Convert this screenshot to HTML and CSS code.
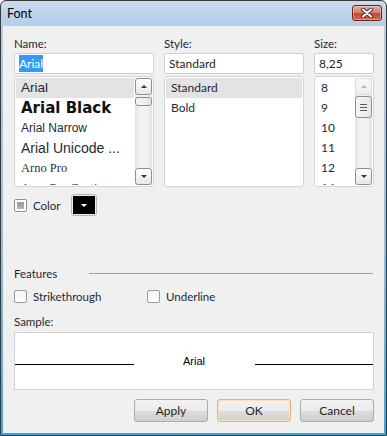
FILE: index.html
```html
<!DOCTYPE html>
<html lang="en">

<head>
    <meta charset="UTF-8">
    <title>Font</title>
    <link rel="stylesheet" href="styles.css">
</head>

<body>
    <div class="window">
        <div class="titlebar">
            <span class="title">Font</span>
            <div class="close-btn">
                <svg width="14" height="10" viewBox="0 0 14 10">
                    <path d="M3 1.5 L11 8.5 M11 1.5 L3 8.5" stroke="#4a3632" stroke-width="4" stroke-linecap="round" fill="none"/>
                    <path d="M3 1.5 L11 8.5 M11 1.5 L3 8.5" stroke="#ffffff" stroke-width="2" stroke-linecap="round" fill="none"/>
                </svg>
            </div>
        </div>

        <div class="client">
            <div class="fields">
                <div class="field">
                    <div class="lbl">Name:</div>
                    <div class="textbox"><span class="selected-text">Arial</span></div>
                    <div class="listbox">
                        <ul class="items">
                            <li class="current f-arial">Arial</li>
                            <li class="f-black">Arial Black</li>
                            <li class="f-narrow">Arial Narrow</li>
                            <li class="f-unicode">Arial Unicode ...</li>
                            <li class="f-arno">Arno Pro</li>
                            <li class="f-arno-caption">Arno Pro Caption</li>
                        </ul>
                        <div class="scrollbar">
                            <div class="sb-btn"><span class="arrow-up"></span></div>
                            <div class="sb-track"><div class="sb-thumb small"></div></div>
                            <div class="sb-btn"><span class="arrow-down"></span></div>
                        </div>
                    </div>
                </div>

                <div class="field">
                    <div class="lbl">Style:</div>
                    <div class="textbox">Standard</div>
                    <div class="listbox">
                        <ul class="items">
                            <li class="current">Standard</li>
                            <li>Bold</li>
                        </ul>
                    </div>
                </div>

                <div class="field">
                    <div class="lbl">Size:</div>
                    <div class="textbox">8,25</div>
                    <div class="listbox">
                        <ul class="items">
                            <li>8</li>
                            <li>9</li>
                            <li>10</li>
                            <li>11</li>
                            <li>12</li>
                            <li>14</li>
                        </ul>
                        <div class="scrollbar">
                            <div class="sb-btn disabled"><span class="arrow-up"></span></div>
                            <div class="sb-track">
                                <div class="sb-thumb grip">
                                    <svg width="7" height="7" viewBox="0 0 7 7">
                                        <path d="M0 0.5 H7 M0 3.5 H7 M0 6.5 H7" stroke="#5a5a5a" stroke-width="1"/>
                                    </svg>
                                </div>
                            </div>
                            <div class="sb-btn"><span class="arrow-down"></span></div>
                        </div>
                    </div>
                </div>
            </div>

            <div class="color-row">
                <span class="checkbox mixed"></span>
                <span class="check-label">Color</span>
                <div class="color-btn"><span class="swatch"><span class="arrow-white"></span></span></div>
            </div>

            <div class="group-head">
                <span class="group-title">Features</span>
                <span class="rule"></span>
            </div>

            <div class="options">
                <div class="option"><span class="checkbox"></span><span class="check-label">Strikethrough</span></div>
                <div class="option"><span class="checkbox"></span><span class="check-label">Underline</span></div>
            </div>

            <div class="lbl sample-lbl">Sample:</div>
            <div class="sample">
                <span class="sample-line"></span>
                <span class="sample-text">Arial</span>
                <span class="sample-line"></span>
            </div>

            <div class="buttons">
                <div class="btn">Apply</div>
                <div class="btn default">OK</div>
                <div class="btn">Cancel</div>
            </div>
        </div>
    </div>
</body>

</html>
```

FILE: styles.css
```css
body {
    margin: 0;
    background: #ffffff;
    font-family: "Lato", "Noto Sans", sans-serif;
    font-size: 11.5px;
    color: #1f2838;
}

.window {
    box-sizing: border-box;
    width: 387px;
    height: 436px;
    border: 1px solid #3a3a3a;
    border-radius: 6px 6px 0 0;
    background: linear-gradient(#c9dcf0 0, #b3cde8 25px, #93bfe4 55%, #3aa6dc 100%);
    display: flex;
    flex-direction: column;
}

.titlebar {
    height: 25px;
    display: flex;
    justify-content: space-between;
    align-items: flex-start;
    padding: 0 4px 0 6px;
}

.title {
    font-size: 12.5px;
    line-height: 25px;
    color: #000000;
}

.close-btn {
    box-sizing: border-box;
    width: 30px;
    height: 16px;
    margin-top: 4px;
    border: 1px solid #6b2419;
    border-radius: 3px;
    background: linear-gradient(#e9a597 0, #d98372 45%, #c8442d 55%, #cf6a52 100%);
    box-shadow: inset 0 0 0 1px rgba(255, 255, 255, 0.35);
    display: flex;
    align-items: center;
    justify-content: center;
}

.client {
    height: 407px;
    margin: 0 2px;
    background: #f0f0f0;
    box-sizing: border-box;
    padding: 10px 10px 0 11px;
}

/* top three columns */
.fields {
    display: grid;
    grid-template-columns: 140px 140px 60px;
    column-gap: 10px;
}

.lbl {
    line-height: 15px;
    height: 15px;
    margin-bottom: 2px;
}

.textbox {
    box-sizing: border-box;
    height: 21px;
    border: 1px solid #d0d0d0;
    border-radius: 2px;
    background: #ffffff;
    padding-left: 4px;
    line-height: 19px;
    font-size: 12px;
    color: #1f1f1f;
}

.selected-text {
    background: #3399ff;
    color: #ffffff;
    padding: 1px 0;
}

.listbox {
    box-sizing: border-box;
    height: 111px;
    margin-top: 2px;
    border: 1px solid #d5d5d5;
    border-radius: 3px;
    background: #ffffff;
    display: flex;
    overflow: hidden;
}

.items {
    list-style: none;
    margin: 1px;
    padding: 0;
    flex: 1;
    overflow: hidden;
}

.items li {
    height: 20px;
    line-height: 20px;
    padding-left: 5px;
    white-space: nowrap;
    overflow: hidden;
    font-size: 12px;
}

.items li.current {
    background: #e3e3e3;
}

.items li.f-arial {
    font-family: "Liberation Sans", sans-serif;
    font-size: 13.5px;
}

.items li.f-black {
    font-family: "DejaVu Sans", sans-serif;
    font-weight: bold;
    font-size: 15px;
    color: #111111;
}

.items li.f-narrow {
    font-family: "Liberation Sans Narrow", "Liberation Sans", sans-serif;
    font-size: 12px;
}

.items li.f-unicode {
    font-family: "Liberation Sans", sans-serif;
    font-size: 14px;
}

.items li.f-arno,
.items li.f-arno-caption {
    font-family: "Liberation Serif", serif;
    font-size: 12.5px;
    color: #333333;
}

/* scrollbar */
.scrollbar {
    width: 17px;
    margin: 1px 1px 1px 0;
    display: flex;
    flex-direction: column;
    background: #ececec;
}

.sb-btn {
    box-sizing: border-box;
    height: 17px;
    border: 1px solid #8e8f8f;
    border-radius: 3px;
    background: linear-gradient(#fdfdfd, #e8e8e8);
    display: flex;
    align-items: center;
    justify-content: center;
}

.sb-btn.disabled {
    border-color: #dcdcdc;
    background: linear-gradient(#f8f8f8, #eeeeee);
}

.arrow-up {
    width: 0;
    height: 0;
    border-left: 3px solid transparent;
    border-right: 3px solid transparent;
    border-bottom: 3px solid #333333;
}

.sb-btn.disabled .arrow-up {
    border-bottom-color: #b8b8b8;
}

.arrow-down {
    width: 0;
    height: 0;
    border-left: 3px solid transparent;
    border-right: 3px solid transparent;
    border-top: 3px solid #333333;
}

.sb-track {
    flex: 1;
    padding: 0 1px;
    background: linear-gradient(90deg, #e2e2e2, #f2f2f2 30%, #f2f2f2 70%, #e2e2e2);
}

.sb-thumb {
    box-sizing: border-box;
    border: 1px solid #8e8f8f;
    border-radius: 3px;
    background: linear-gradient(90deg, #f6f6f6, #e6e6e6);
}

.sb-thumb.small {
    height: 9px;
    margin: 2px -1px 0;
}

.sb-thumb.grip {
    height: 22px;
    margin: 1px -1px 0;
    display: flex;
    align-items: center;
    justify-content: center;
}

/* color row */
.color-row {
    margin-top: 7px;
    height: 22px;
    display: flex;
    align-items: center;
}

.checkbox {
    box-sizing: border-box;
    width: 13px;
    height: 13px;
    border: 1px solid #9c9c9c;
    border-radius: 2px;
    background: linear-gradient(#f4f4f4, #ffffff);
    flex-shrink: 0;
}

.checkbox.mixed {
    border-color: #8e8f8f;
    background: #ffffff;
    padding: 2px;
}

.checkbox.mixed::before {
    content: "";
    display: block;
    width: 7px;
    height: 7px;
    background: linear-gradient(#989898, #b8b8b8);
}

.check-label {
    margin-left: 6px;
    line-height: 15px;
}

.color-btn {
    box-sizing: border-box;
    width: 26px;
    height: 22px;
    margin-left: 10px;
    border: 1px solid #b5b5b5;
    border-radius: 3px;
    padding: 1px;
    background: #ececec;
}

.swatch {
    display: flex;
    width: 100%;
    height: 100%;
    background: #000000;
    align-items: center;
    justify-content: center;
}

.arrow-white {
    width: 0;
    height: 0;
    border-left: 3px solid transparent;
    border-right: 3px solid transparent;
    border-top: 3px solid #ffffff;
}

/* features */
.group-head {
    margin-top: 50px;
    height: 15px;
    display: flex;
    align-items: center;
}

.group-title {
    width: 75px;
    line-height: 15px;
}

.rule {
    flex: 1;
    height: 1px;
    margin-right: 1px;
    background: #a0a0a0;
}

.options {
    margin-top: 8px;
    height: 15px;
    display: flex;
    align-items: center;
}

.option {
    display: flex;
    align-items: center;
}

.option:first-child {
    width: 133px;
}

.sample-lbl {
    margin-top: 10px;
    margin-bottom: 0;
}

.sample {
    box-sizing: border-box;
    height: 58px;
    margin-top: 3px;
    border: 1px solid #d3d3d3;
    background: #ffffff;
    padding-top: 21px;
    display: flex;
    align-items: baseline;
}

.sample-line {
    flex: 1;
    height: 0;
    border-bottom: 1px solid #000000;
}

.sample-text {
    width: 121px;
    text-align: center;
    font-family: "Liberation Sans", sans-serif;
    font-size: 11px;
    line-height: 15px;
    color: #000000;
}

/* dialog buttons */
.buttons {
    margin-top: 9px;
    display: flex;
    justify-content: flex-end;
    gap: 9px;
}

.btn {
    box-sizing: border-box;
    width: 74px;
    height: 23px;
    border: 1px solid #acacac;
    border-radius: 3px;
    background: linear-gradient(#f2f2f2 0, #ebebeb 50%, #dddddd 51%, #cfcfcf 100%);
    text-align: center;
    line-height: 21px;
    font-size: 12px;
    color: #1f1f1f;
}

.btn.default {
    border-color: #e7b46a;
    box-shadow: inset 0 0 0 1px #f9e2bd;
}
```
